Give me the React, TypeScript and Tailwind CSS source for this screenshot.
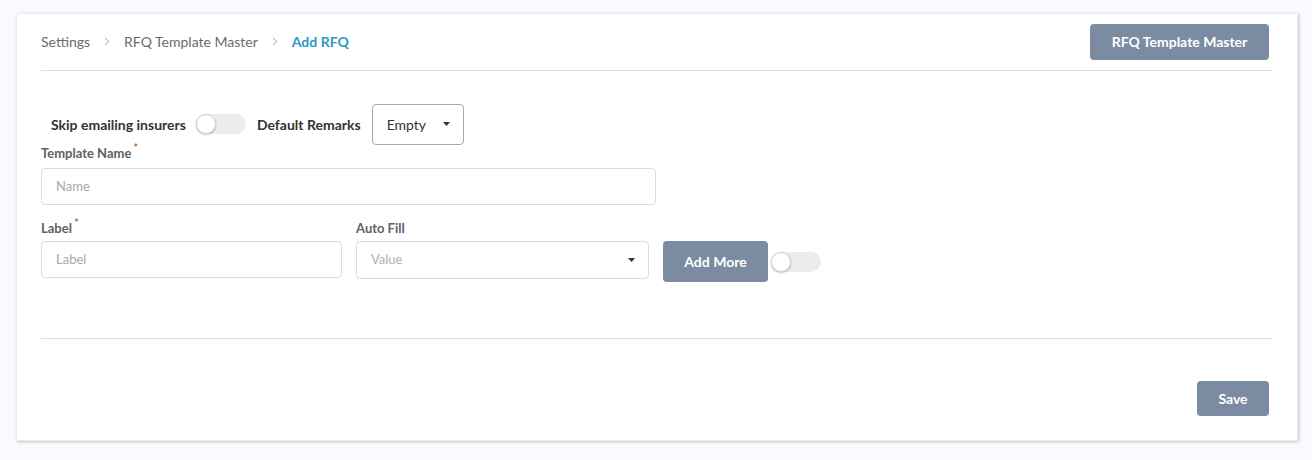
import React from "react";

function Toggle() {
  return (
    <div className="relative w-[50px] h-[20px] rounded-full bg-[#ececec] shrink-0">
      <div className="absolute left-0 top-0 w-[20px] h-[20px] rounded-full bg-white border border-[#d4d4d4] shadow-[0_1px_2px_rgba(0,0,0,0.25)]" />
    </div>
  );
}

function Caret() {
  return (
    <svg width="7" height="4" viewBox="0 0 7 4" className="shrink-0">
      <path d="M0 0 L7 0 L3.5 4 Z" fill="#333" />
    </svg>
  );
}

function Chevron() {
  return (
    <svg width="6" height="9" viewBox="0 0 6 9">
      <path d="M1 1 L5 4.5 L1 8" stroke="#c4c4c4" strokeWidth="1.1" fill="none" />
    </svg>
  );
}

export default function App() {
  return (
    <div
      className="w-[1312px] h-[460px] bg-[#f8fafd] pt-[13px] pl-[16px]"
      style={{ fontFamily: "Lato, 'Open Sans', sans-serif" }}
    >
      <div className="w-[1282px] h-[428px] bg-white border border-[#ececec] shadow-[1px_1px_3px_rgba(0,0,0,0.22)] px-[24px]">
        {/* Header */}
        <div className="flex items-center justify-between h-[57px] border-b border-[#dedede] pt-[1px]">
          <div className="flex items-center gap-[14px] text-[14px] text-[#6b6b6b] pb-[2px]">
            <span>Settings</span>
            <Chevron />
            <span>RFQ Template Master</span>
            <Chevron />
            <span className="text-[#2a9ac3] font-bold">Add RFQ</span>
          </div>
          <button className="mr-[4px] w-[179px] h-[36px] rounded-[4px] bg-[#7b8ba1] text-white font-bold text-[14px] mb-[2px]">
            RFQ Template Master
          </button>
        </div>

        {/* Form */}
        <div className="pt-[33px]">
          <div className="flex items-center h-[40px] pl-[10px]">
            <span className="text-[14px] font-bold text-[#333]">Skip emailing insurers</span>
            <div className="ml-[10px]">
              <Toggle />
            </div>
            <span className="ml-[11px] text-[14px] font-bold text-[#333]">Default Remarks</span>
            <div className="ml-[11px] w-[92px] h-[41px] border border-[#a9a9a9] rounded-[4px] flex items-center justify-between pl-[14px] pr-[13px] text-[14px] text-[#333]">
              <span>Empty</span>
              <Caret />
            </div>
          </div>

          <div className="text-[13px] font-bold text-[#616161] h-[18px] leading-[18px]">
            Template Name<sup className="text-[#b8763a] text-[12px] ml-[2px]">*</sup>
          </div>
          <div className="mt-[6px] w-[615px] h-[37px] border border-[#dcdcdc] rounded-[4px] flex items-center pl-[14px] text-[13px] text-[#a8a8a8]">
            Name
          </div>

          <div className="flex items-start mt-[14px]">
            <div className="w-[301px]">
              <div className="text-[13px] font-bold text-[#616161] h-[18px] leading-[18px]">
                Label<sup className="text-[#b8763a] text-[12px] ml-[2px]">*</sup>
              </div>
              <div className="mt-[4px] w-[301px] h-[37px] border border-[#dcdcdc] rounded-[4px] flex items-center pl-[14px] text-[13px] text-[#a8a8a8]">
                Label
              </div>
            </div>
            <div className="ml-[14px] w-[293px]">
              <div className="text-[13px] font-bold text-[#616161] h-[18px] leading-[18px]">Auto Fill</div>
              <div className="mt-[4px] w-[293px] h-[38px] border border-[#dcdcdc] rounded-[4px] flex items-center justify-between pl-[14px] pr-[13px] text-[13px] text-[#b0b0b0]">
                <span>Value</span>
                <Caret />
              </div>
            </div>
            <div className="ml-[14px] mt-[22px] flex items-center">
              <button className="w-[105px] h-[41px] rounded-[4px] bg-[#7b8ba1] text-white font-bold text-[14px]">
                Add More
              </button>
              <div className="ml-[3px]">
                <Toggle />
              </div>
            </div>
          </div>

          <div className="mt-[56px] border-t border-[#dedede] w-[1232px]" />

          <div className="flex justify-end mt-[42px] w-[1228px]">
            <button className="w-[72px] h-[35px] rounded-[4px] bg-[#7b8ba1] text-white font-bold text-[14px]">
              Save
            </button>
          </div>
        </div>
      </div>
    </div>
  );
}
